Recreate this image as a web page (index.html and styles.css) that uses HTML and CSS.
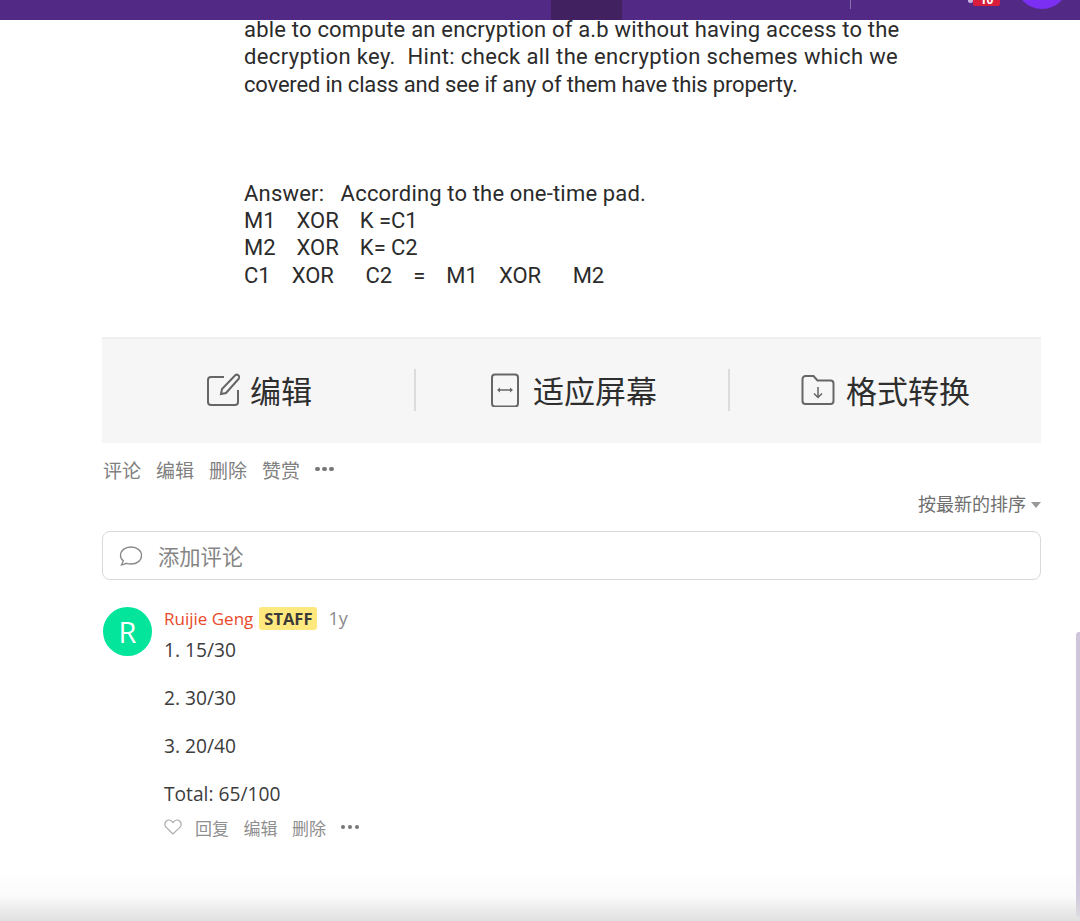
FILE: index.html
```html
<!DOCTYPE html>
<html lang="zh-CN">
<head>
    <meta charset="UTF-8">
    <title>Comment</title>
    <link rel="stylesheet" href="styles.css">
</head>
<body>
    <div class="topbar">
        <div class="tab-active"></div>
        <div class="bar-sep"></div>
        <div class="badge"><span class="badge-dot"></span><span class="badge-num">10</span></div>
        <div class="top-avatar"></div>
    </div>

    <div class="page">
        <div class="doc">
            <p class="doc-line wide">able to compute an encryption of a.b without having access to the</p>
            <p class="doc-line wider">decryption key.&nbsp; Hint: check all the encryption schemes which we</p>
            <p class="doc-line tight">covered in class and see if any of them have this property.</p>
            <div class="answer">
                <p class="doc-line wide">Answer:&nbsp;&nbsp; According to the one-time pad.</p>
                <p class="doc-line">M1 &nbsp;&nbsp; XOR &nbsp;&nbsp; K =C1</p>
                <p class="doc-line">M2 &nbsp;&nbsp; XOR &nbsp;&nbsp; K= C2</p>
                <p class="doc-line">C1 &nbsp;&nbsp; XOR &nbsp;&nbsp;&nbsp;&nbsp; C2 &nbsp;&nbsp; = &nbsp;&nbsp; M1 &nbsp;&nbsp; XOR &nbsp;&nbsp;&nbsp;&nbsp; M2</p>
            </div>
        </div>

        <div class="toolbar">
            <div class="tool tool-edit">
                <svg class="tool-icon" width="34" height="34" viewBox="0 0 34 34" fill="none" stroke="#666" stroke-width="2">
                    <path d="M18 4H5a3 3 0 0 0-3 3v22a3 3 0 0 0 3 3h24a3 3 0 0 0 3-3V17"/>
                    <path d="M15 21l1-5L29 2.500c1-1 2.500-1 3.500 0s1 2.500 0 3.500L20 20z"/>
                </svg>
                <span>编辑</span>
            </div>
            <div class="tool tool-fit">
                <svg class="tool-icon" width="30" height="34" viewBox="0 0 30 34" fill="none" stroke="#666" stroke-width="2">
                    <rect x="2" y="1.500" width="26" height="32" rx="3"/>
                    <path d="M8 17h14" stroke-width="1.500"/>
                    <path d="M10 14.500L7 17l3 2.500zM20 14.500l3 2.500-3 2.500z" fill="#666" stroke="none"/>
                </svg>
                <span>适应屏幕</span>
            </div>
            <div class="tool tool-convert">
                <svg class="tool-icon" width="34" height="32" viewBox="0 0 34 32" fill="none" stroke="#666" stroke-width="2">
                    <path d="M1.500 5a3 3 0 0 1 3-3h8l4 4.500h13a3 3 0 0 1 3 3V27a3 3 0 0 1-3 3h-25a3 3 0 0 1-3-3z"/>
                    <path d="M17 13v10M13 19.500l4 4 4-4" stroke-width="1.500"/>
                </svg>
                <span>格式转换</span>
            </div>
        </div>

        <div class="post-actions">
            <span>评论</span>
            <span>编辑</span>
            <span>删除</span>
            <span>赞赏</span>
            <span class="dots"><i></i><i></i><i></i></span>
        </div>

        <div class="sort-row">按最新的排序<span class="caret"></span></div>

        <div class="comment-box">
            <svg width="24" height="22" viewBox="0 0 24 22" fill="none" stroke="#888" stroke-width="1.300">
                <path d="M12 2c6 0 10.500 3.500 10.500 8.500S18 19 12 19c-1.500 0-3-.2-4.300-.7L2.500 20l1.800-4.200C2.500 14.500 1.500 12.600 1.500 10.500 1.500 5.500 6 2 12 2z"/>
            </svg>
            <span>添加评论</span>
        </div>

        <div class="comment">
            <div class="avatar">R</div>
            <div class="comment-body">
                <div class="comment-head">
                    <span class="author">Ruijie Geng</span>
                    <span class="staff">STAFF</span>
                    <span class="age">1y</span>
                </div>
                <p class="score">1. 15/30</p>
                <p class="score">2. 30/30</p>
                <p class="score">3. 20/40</p>
                <p class="score">Total: 65/100</p>
                <div class="comment-actions">
                    <svg class="heart" width="18" height="16" viewBox="0 0 18 16" fill="none" stroke="#aaa" stroke-width="1.200">
                        <path d="M9 15L2.200 8.400C.4 6.600.4 3.800 2.100 2.200c1.700-1.600 4.300-1.500 5.900.2L9 3.500l1-1.100c1.600-1.700 4.200-1.800 5.900-.2 1.700 1.600 1.700 4.400-.1 6.200z"/>
                    </svg>
                    <span>回复</span>
                    <span>编辑</span>
                    <span>删除</span>
                    <span class="dots"><i></i><i></i><i></i></span>
                </div>
            </div>
        </div>
    </div>

    <div class="scroll-thumb"></div>
    <div class="bottom-fade"></div>
</body>
</html>
```

FILE: styles.css
```css
html, body {
    height: 100%;
}
body {
    margin: 0;
    height: 921px;
    overflow: hidden;
    background-color: #fff;
    font-family: "Open Sans", "Noto Sans CJK SC", sans-serif;
    position: relative;
}
p {
    margin: 0;
}
.topbar {
    height: 20px;
    background-color: #522a86;
    display: flex;
    position: relative;
    z-index: 2;
    overflow: hidden;
}
.tab-active {
    width: 71px;
    height: 20px;
    margin-left: 551px;
    background-color: #41215f;
}
.bar-sep {
    width: 1px;
    height: 9px;
    margin-left: 228px;
    background-color: #8a6fb0;
}
.badge {
    position: absolute;
    left: 968px;
    top: 0;
    display: flex;
    align-items: flex-start;
}
.badge-dot {
    width: 5px;
    height: 3px;
    border-radius: 0 0 3px 3px;
    background-color: #c9b8de;
}
.badge-num {
    width: 27px;
    height: 6px;
    background-color: #d81e3c;
    border-radius: 0 0 2px 2px;
    color: #fff;
    font-size: 12px;
    font-weight: 700;
    line-height: 0;
    text-align: center;
    overflow: hidden;
}
.top-avatar {
    position: absolute;
    left: 1016px;
    top: -43px;
    width: 52px;
    height: 52px;
    border-radius: 50%;
    background-color: #7b2ff2;
}
.page {
    padding: 0 39px 0 102px;
}
.doc {
    margin-top: -4px;
    padding-left: 142px;
    color: #2b2b2b;
    font-family: "Roboto", "Noto Sans", sans-serif;
    font-size: 22px;
    line-height: 27.300px;
}
.doc-line {
    white-space: nowrap;
}
.wide {
    letter-spacing: 0.2px;
}
.wider {
    letter-spacing: 0.37px;
}
.tight {
    letter-spacing: -0.18px;
}
.answer {
    margin-top: 82px;
    word-spacing: -0.2px;
}
.toolbar {
    margin-top: 48px;
    height: 104px;
    background-color: #f6f6f6;
    border-top: 2px solid #efefef;
    display: grid;
    grid-template-columns: 312px 314px 1fr;
}
.tool {
    display: flex;
    align-items: center;
    padding-bottom: 3px;
    font-family: "Noto Sans CJK SC", sans-serif;
    font-size: 31px;
    color: #2e2e2e;
    position: relative;
}
.tool-edit {
    padding-left: 104px;
    gap: 10px;
}
.tool-fit {
    padding-left: 76px;
    gap: 13px;
}
.tool-convert {
    padding-left: 73px;
    gap: 11px;
}
.tool + .tool::before {
    content: "";
    position: absolute;
    left: 0;
    top: 30px;
    width: 2px;
    height: 42px;
    background-color: #dcdcdc;
}
.post-actions {
    margin-top: 14px;
    padding-left: 1px;
    display: flex;
    align-items: center;
    gap: 15px;
    height: 24px;
    font-family: "Noto Sans CJK SC", sans-serif;
    font-size: 19px;
    color: #808080;
}
.dots {
    display: inline-flex;
    gap: 2.500px;
}
.dots i {
    width: 4.500px;
    height: 4.500px;
    border-radius: 50%;
    background-color: #777;
}
.sort-row {
    margin-top: 10px;
    height: 24px;
    display: flex;
    justify-content: flex-end;
    align-items: center;
    font-family: "Noto Sans CJK SC", sans-serif;
    font-size: 18px;
    color: #6f6f6f;
}
.caret {
    margin-left: 5px;
    margin-top: 3px;
    border-left: 5.500px solid transparent;
    border-right: 5.500px solid transparent;
    border-top: 6px solid #999;
}
.comment-box {
    margin-top: 16px;
    height: 47px;
    border: 1px solid #d9d9d9;
    border-radius: 8px;
    display: flex;
    align-items: center;
    gap: 15px;
    padding-left: 16px;
    font-family: "Noto Sans CJK SC", sans-serif;
    font-size: 21.300px;
    color: #858585;
}
.comment {
    margin-top: 27px;
    padding-left: 1px;
    display: flex;
    gap: 12px;
}
.avatar {
    width: 49px;
    height: 49px;
    border-radius: 50%;
    background-color: #03e59a;
    color: #fff;
    font-size: 29px;
    line-height: 49px;
    text-align: center;
    flex-shrink: 0;
}
.comment-head {
    display: flex;
    align-items: center;
    height: 22px;
    margin-bottom: 9px;
    font-size: 17px;
}
.author {
    color: #e8492a;
}
.staff {
    margin-left: 6px;
    padding: 0 5px;
    height: 23px;
    line-height: 23px;
    background-color: #ffe97f;
    border-radius: 3px;
    color: #3a3a3a;
    font-size: 16.500px;
    font-weight: 700;
}
.age {
    margin-left: 11px;
    color: #8a8a8a;
    font-size: 18px;
}
.score {
    height: 24px;
    line-height: 24px;
    font-size: 19.200px;
    color: #3c3c3c;
}
.score + .score {
    margin-top: 24px;
}
.comment-actions {
    margin-top: 9px;
    display: flex;
    align-items: center;
    gap: 14.500px;
    height: 24px;
    font-family: "Noto Sans CJK SC", sans-serif;
    font-size: 17px;
    color: #8f8f8f;
}
.heart {
    margin-right: -1.500px;
}
.scroll-thumb {
    position: absolute;
    right: 0;
    top: 632px;
    width: 4px;
    height: 285px;
    background-color: #cfc6dc;
    border-radius: 3px 0 0 3px;
}
.bottom-fade {
    position: absolute;
    left: 0;
    right: 0;
    bottom: 0;
    height: 50px;
    background: linear-gradient(to bottom, rgba(224, 224, 224, 0), rgba(224, 224, 224, 0.15) 50%, rgba(224, 224, 224, 1));
}
```
